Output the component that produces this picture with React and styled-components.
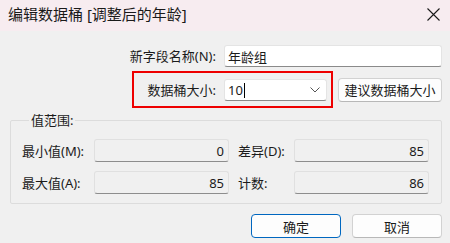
import React from "react";
import styled, { createGlobalStyle } from "styled-components";

const Global = createGlobalStyle`
  html, body { margin: 0; padding: 0; }
  body {
    width: 450px; height: 243px; overflow: hidden;
    background: #f0f0f0;
    font-family: "Noto Sans", "Noto Sans CJK SC", sans-serif;
    color: #1b1b1b;
  }
  * { box-sizing: border-box; }
`;

const Window = styled.div`
  width: 450px;
  height: 243px;
  display: flex;
  flex-direction: column;
  background: #f0f0f0;
`;

const TitleBar = styled.div`
  height: 31px;
  flex: none;
  background: #f7ecf0;
  display: flex;
  align-items: center;
  justify-content: space-between;
  padding: 0 10px 4px 8px;
`;

const Title = styled.div`
  font-size: 15px;
  line-height: 20px;
  color: #1a1a1a;
`;

const CloseIcon = styled.svg`
  width: 13px;
  height: 13px;
  display: block;
  margin-top: 2px;
`;

const Body = styled.div`
  display: flex;
  flex-direction: column;
  padding: 14px 8px 0 10px;
`;

const Row = styled.div`
  display: flex;
  justify-content: flex-end;
  align-items: center;
  gap: ${(p) => p.$gap || 0}px;
  margin-top: ${(p) => p.$top || 0}px;
  padding-right: ${(p) => p.$right || 0}px;
`;

const Label = styled.span`
  font-size: 13px;
  line-height: 18px;
  white-space: nowrap;
`;

const TextInput = styled.div`
  width: 218px;
  height: 22px;
  background: #ffffff;
  border: 1px solid #e4e4e4;
  border-bottom: 1px solid #8a8a8a;
  border-radius: 3px;
  margin-left: 8px;
  padding-left: 3px;
  display: flex;
  align-items: center;
  font-size: 13px;
`;

const Highlight = styled.div`
  display: flex;
  align-items: center;
  border: 2px solid #ee0000;
  padding: 6px 4px 5px 14px;
`;

const Combo = styled.div`
  width: 103px;
  height: 22px;
  background: #ffffff;
  border: 1px solid #e4e4e4;
  border-bottom: 1px solid #8a8a8a;
  border-radius: 3px;
  margin-left: 8px;
  padding: 0 6px 0 3px;
  display: flex;
  align-items: center;
  justify-content: space-between;
  font-size: 13px;
`;

const Value = styled.span`
  display: flex;
  align-items: center;
`;

const Caret = styled.span`
  width: 1px;
  height: 15px;
  background: #000;
  margin-left: 1px;
`;

const Chevron = styled.svg`
  width: 10px;
  height: 6px;
  display: block;
`;

const Button = styled.button`
  width: ${(p) => p.$w || 90}px;
  height: 24px;
  font-family: inherit;
  font-size: 13px;
  color: #1a1a1a;
  background: #fdfdfd;
  border: 1px solid ${(p) => (p.$primary ? "#0067c0" : "#d2d2d2")};
  border-bottom-color: ${(p) => (p.$primary ? "#0067c0" : "#b8b8b8")};
  border-radius: 4px;
  padding: 0;
  display: flex;
  align-items: center;
  justify-content: center;
`;

const Group = styled.fieldset`
  margin: 4px 0 0 0;
  width: 432px;
  border: 1px solid #dcdcdc;
  border-radius: 2px;
  padding: 11px 12px 9px 11px;
  display: grid;
  grid-template-columns: 72px 135px 65px 135px;
  row-gap: 9px;
  align-items: center;
`;

const Legend = styled.legend`
  font-size: 13px;
  line-height: 16px;
  padding: 0 2px;
  margin-left: 7px;
`;

const GridLabel = styled.span`
  font-size: 13px;
  line-height: 18px;
  white-space: nowrap;
  padding-left: ${(p) => p.$pad || 0}px;
`;

const ReadOnly = styled.div`
  height: 23px;
  background: #f0f0f0;
  border: 1px solid #e0e0e0;
  border-bottom: 1px solid #8d8d8d;
  border-radius: 3px;
  display: flex;
  align-items: center;
  justify-content: flex-end;
  padding-right: 4px;
  font-size: 13px;
`;

const Footer = styled.div`
  display: flex;
  justify-content: flex-end;
  gap: 11px;
  margin-top: 10px;
`;

export default function App() {
  return (
    <Window>
      <Global />
      <TitleBar>
        <Title>编辑数据桶 [调整后的年龄]</Title>
        <CloseIcon viewBox="0 0 13 13">
          <path d="M0.5 0.5 L12.5 12.5 M12.5 0.5 L0.5 12.5" stroke="#1a1a1a" strokeWidth="1.1" fill="none" />
        </CloseIcon>
      </TitleBar>
      <Body>
        <Row>
          <Label>新字段名称(N):</Label>
          <TextInput>年龄组</TextInput>
        </Row>
        <Row $top={4} $gap={5}>
          <Highlight>
            <Label>数据桶大小:</Label>
            <Combo>
              <Value>
                10<Caret />
              </Value>
              <Chevron viewBox="0 0 10 6">
                <path d="M0.5 0.5 L5 5 L9.5 0.5" stroke="#555" strokeWidth="1" fill="none" />
              </Chevron>
            </Combo>
          </Highlight>
          <Button $w={104}>建议数据桶大小</Button>
        </Row>
        <Group>
          <Legend>值范围:</Legend>
          <GridLabel>最小值(M):</GridLabel>
          <ReadOnly>0</ReadOnly>
          <GridLabel $pad={9}>差异(D):</GridLabel>
          <ReadOnly>85</ReadOnly>
          <GridLabel>最大值(A):</GridLabel>
          <ReadOnly>85</ReadOnly>
          <GridLabel $pad={9}>计数:</GridLabel>
          <ReadOnly>86</ReadOnly>
        </Group>
        <Footer>
          <Button $primary>确定</Button>
          <Button>取消</Button>
        </Footer>
      </Body>
    </Window>
  );
}
